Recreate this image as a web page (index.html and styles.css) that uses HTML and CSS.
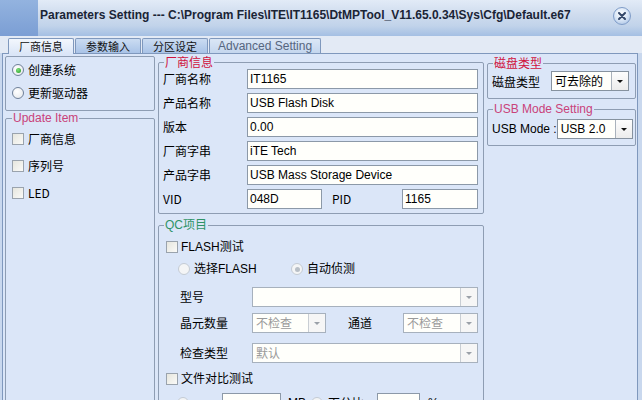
FILE: index.html
```html
<!DOCTYPE html>
<html lang="zh-CN">
<head>
<meta charset="utf-8">
<title>Parameters Setting</title>
<link rel="stylesheet" href="styles.css">
</head>
<body>
<div class="window">
  <div class="titlebar">
    <div class="tb-icon"></div>
    <div class="tb-title">Parameters Setting --- C:\Program Files\ITE\IT1165\DtMPTool_V11.65.0.34\Sys\Cfg\Default.e67</div>
    <div class="tb-close">
      <svg width="8" height="8" viewBox="0 0 8 8"><path d="M1 1L7 7M7 1L1 7" stroke="#34486a" stroke-width="2" stroke-linecap="round"/></svg>
    </div>
  </div>
  <div class="tabstrip">
    <div class="tab active">厂商信息</div>
    <div class="tab">参数输入</div>
    <div class="tab">分区设定</div>
    <div class="tab adv">Advanced Setting</div>
  </div>
  <div class="page">
    <div class="col col-left">
      <div class="grp grp-mode">
        <div class="opt"><span class="radio on"></span>创建系统</div>
        <div class="opt"><span class="radio"></span>更新驱动器</div>
      </div>
      <fieldset class="grp grp-update">
        <legend class="lg-pink">Update Item</legend>
        <div class="opt chk-row"><span class="check"></span>厂商信息</div>
        <div class="opt chk-row"><span class="check"></span>序列号</div>
        <div class="opt chk-row"><span class="check"></span>LED</div>
      </fieldset>
    </div>

    <div class="col col-mid">
      <fieldset class="grp grp-vendor">
        <legend class="lg-red">厂商信息</legend>
        <div class="frow"><span class="flabel">厂商名称</span><div class="field wide">IT1165</div></div>
        <div class="frow"><span class="flabel">产品名称</span><div class="field wide">USB Flash Disk</div></div>
        <div class="frow"><span class="flabel">版本</span><div class="field wide">0.00</div></div>
        <div class="frow"><span class="flabel">厂商字串</span><div class="field wide">iTE Tech</div></div>
        <div class="frow"><span class="flabel">产品字串</span><div class="field wide">USB Mass Storage Device</div></div>
        <div class="frow"><span class="flabel">VID</span><div class="field vid">048D</div><span class="flabel pid-label">PID</span><div class="field pid">1165</div></div>
      </fieldset>

      <fieldset class="grp grp-qc">
        <legend class="lg-green">QC项目</legend>
        <div class="qrow q1"><span class="check"></span>FLASH测试</div>
        <div class="qrow q2">
          <span class="ropt first"><span class="radio dis"></span>选择FLASH</span>
          <span class="ropt"><span class="radio dis on"></span>自动侦测</span>
        </div>
        <div class="qrow q3"><span class="qlabel">型号</span><div class="combo dis c-wide"><span class="ctext"></span><span class="cbtn"></span></div></div>
        <div class="qrow q4">
          <span class="qlabel">晶元数量</span><div class="combo dis c-small"><span class="ctext">不检查</span><span class="cbtn"></span></div>
          <span class="qlabel ch-label">通道</span><div class="combo dis c-small2"><span class="ctext">不检查</span><span class="cbtn"></span></div>
        </div>
        <div class="qrow q5"><span class="qlabel">检查类型</span><div class="combo dis c-wide"><span class="ctext">默认</span><span class="cbtn"></span></div></div>
        <div class="qrow q6"><span class="check"></span>文件对比测试</div>
        <div class="qrow q7">
          <span class="radio dis r-size"></span>
          <div class="field small-a"></div><span class="unit u-mb">MB</span>
          <span class="radio dis r-pct"></span><span class="unit u-pct">百分比</span>
          <div class="field small-b"></div><span class="unit u-sign">%</span>
        </div>
      </fieldset>
    </div>

    <div class="col col-right">
      <fieldset class="grp grp-disk">
        <legend class="lg-red">磁盘类型</legend>
        <div class="rrow"><span class="rlabel">磁盘类型</span><div class="combo c-disk"><span class="ctext">可去除的</span><span class="cbtn"></span></div></div>
      </fieldset>
      <fieldset class="grp grp-usb">
        <legend class="lg-pink">USB Mode Setting</legend>
        <div class="rrow"><span class="rlabel">USB Mode :</span><div class="combo c-usb"><span class="ctext">USB 2.0</span><span class="cbtn"></span></div></div>
      </fieldset>
    </div>
  </div>
</div>
</body>
</html>
```

FILE: styles.css
```css
* { box-sizing: border-box; }
html, body { margin: 0; padding: 0; }
body {
  width: 642px;
  height: 400px;
  overflow: hidden;
  background: #c9d8ee;
  font-family: "Liberation Sans", "Noto Sans CJK SC", sans-serif;
  font-size: 12px;
  color: #000;
}
.window { width: 642px; }

/* title bar */
.titlebar {
  height: 36px;
  display: flex;
  align-items: flex-start;
  background: linear-gradient(#e2ebf7 0%, #cfdcee 40%, #c1d3ea 72%, #a4bfe3 100%);
}
.tb-icon {
  width: 38px;
  height: 36px;
  background: linear-gradient(#93b3df, #7b9ed4);
}
.tb-title {
  flex: 1;
  margin: 8px 0 0 2px;
  font-weight: bold;
  font-size: 12px;
  line-height: 14px;
  color: #1a2436;
  white-space: nowrap;
}
.tb-close {
  width: 18px;
  height: 18px;
  margin: 7px 11px 0 0;
  border-radius: 50%;
  border: 1px solid #7f9cc8;
  background: radial-gradient(circle at 45% 35%, #ffffff 0%, #dce8f7 45%, #9db9e0 100%);
  display: flex;
  align-items: center;
  justify-content: center;
}

/* tabs */
.tabstrip {
  height: 17px;
  display: flex;
  align-items: flex-end;
  padding-left: 8px;
  gap: 1px;
  background: #e3eaf5;
}
.tab {
  height: 15px;
  padding: 0 10px;
  font-family: "Noto Sans CJK SC", sans-serif;
  font-size: 11px;
  line-height: 14px;
  color: #111;
  border: 1px solid #7f98bd;
  border-bottom: none;
  border-radius: 2px 2px 0 0;
  background: linear-gradient(#cbdcf2, #a9c3e7);
}
.tab.active {
  height: 16px;
  margin-bottom: -1px;
  background: linear-gradient(#f3f7fd, #dbe6f7);
  position: relative;
}
.tab.adv {
  padding: 0 8px;
  font-family: "Liberation Sans", sans-serif;
  font-size: 12px;
  color: #56667e;
  background: linear-gradient(#dbe7f6, #c4d6ee);
}

/* page */
.page {
  margin-left: 2px;
  width: 636px;
  height: 360px;
  border: 1px solid #7f98bd;
  border-bottom: none;
  padding: 1px 1px 0 2px;
  background: #dbe6f8;
  display: flex;
  gap: 3px;
  align-items: flex-start;
}
.col { display: flex; flex-direction: column; }
.col-left { width: 150px; }
.col-mid { width: 326px; }
.col-right { width: 149px; }

/* group boxes */
.grp {
  margin: 0;
  min-width: 0;
  border: 1px solid #8e9db3;
  border-radius: 2px;
  padding: 0 4px;
}
legend {
  padding: 0 1px;
  margin-left: 1px;
  font-size: 12px;
  line-height: 14px;
  height: 14px;
}
.lg-red { color: #d0123e; font-family: "Noto Sans CJK SC", sans-serif; }
.lg-pink { color: #c9427a; }
.lg-green { color: #2f9467; font-family: "Liberation Sans", "Noto Sans CJK SC", sans-serif; }

.opt {
  height: 20px;
  display: flex;
  align-items: center;
  font-family: "Noto Sans CJK SC", sans-serif;
  font-size: 12px;
  line-height: 14px;
}

/* radio + checkbox */
.radio {
  width: 12px;
  height: 12px;
  border-radius: 50%;
  border: 1px solid #6f8099;
  background: radial-gradient(circle at 40% 35%, #ffffff, #e3e6ea);
  display: inline-flex;
  align-items: center;
  justify-content: center;
  flex: none;
}
.radio.on::after {
  content: "";
  width: 5px;
  height: 5px;
  border-radius: 50%;
  background: radial-gradient(circle at 40% 35%, #7fe07a, #1f9a23);
}
.radio.dis { border-color: #c4cbd4; background: #f4f5f6; }
.radio.dis.on::after { background: #b8bfc7; }
.check {
  width: 12px;
  height: 12px;
  border: 1px solid #9aa3ad;
  background: linear-gradient(135deg, #e6e6de, #fafaf8);
  flex: none;
}

.grp-mode {
  margin-top: 1px;
  height: 55px;
  padding: 3px 0 0 6px;
  display: flex;
  flex-direction: column;
  gap: 3px;
}
.grp-mode .radio { margin-right: 4px; }

.grp-update {
  height: 320px;
  padding: 4px 0 0 6px;
  display: flex;
  flex-direction: column;
  gap: 7px;
}
.grp-update legend { margin-left: 0; font-family: "Liberation Sans", sans-serif; }
.chk-row .check { margin-right: 4px; }

/* vendor box */
.grp-vendor {
  height: 159px;
  padding: 0 4px 4px 4px;
  display: flex;
  flex-direction: column;
  gap: 4px;
}
.grp-vendor legend { margin-left: 1px; }
.frow {
  height: 20px;
  display: flex;
  align-items: center;
}
.flabel {
  width: 84px;
  flex: none;
  font-family: "Noto Sans CJK SC", sans-serif;
  font-size: 12px;
  line-height: 14px;
}
.field {
  height: 20px;
  border: 1px solid #8c99a8;
  background: #fffffb;
  padding-left: 2px;
  line-height: 18px;
  font-size: 12px;
  white-space: nowrap;
  flex: none;
}
.field.wide { width: 231px; }
.field.vid { width: 75px; }
.flabel.pid-label { width: 70px; margin-left: 10px; }
.field.pid { width: 76px; }

/* QC box */
.grp-qc {
  margin-top: 4px;
  height: 300px;
  padding: 5px 4px 0 4px;
}
.qrow {
  height: 20px;
  display: flex;
  align-items: center;
  font-family: "Liberation Sans", "Noto Sans CJK SC", sans-serif;
  font-size: 12px;
  line-height: 14px;
}
.q1, .q6 { padding-left: 3px; }
.q1 .check, .q6 .check { margin-right: 3px; }
.q2 { margin-top: 2px; padding-left: 15px; }
.q3 { margin-top: 8px; }
.q4 { margin-top: 6px; }
.q5 { margin-top: 10px; }
.q6 { margin-top: 6px; }
.q7 { margin-top: 4px; padding-left: 14px; }

.ropt { display: flex; align-items: center; }
.ropt .radio { margin-right: 4px; }
.ropt.first { width: 113px; }

.qlabel {
  width: 89px;
  padding-left: 17px;
  flex: none;
  font-family: "Noto Sans CJK SC", sans-serif;
}
.qlabel.ch-label { width: 77px; padding-left: 22px; }

/* combos */
.combo {
  height: 20px;
  display: flex;
  flex: none;
  border: 1px solid #86929f;
  background: #fffffb;
  font-family: "Noto Sans CJK SC", sans-serif;
  font-size: 12px;
  line-height: 18px;
}
.ctext { flex: 1; padding-left: 3px; white-space: nowrap; overflow: hidden; }
.cbtn {
  width: 17px;
  border-left: 1px solid #aab2bc;
  background: linear-gradient(#fdfdfd, #ececec);
  display: flex;
  align-items: center;
  justify-content: center;
}
.cbtn::after {
  content: "";
  border-left: 3px solid transparent;
  border-right: 3px solid transparent;
  border-top: 3px solid #111;
}
.combo.dis { border-color: #a7b1bd; color: #9a9a9a; }
.combo.dis .cbtn { background: #f6f6f6; border-left-color: #c9ced4; }
.combo.dis .cbtn::after { border-top-color: #9aa0a8; }
.c-wide { width: 226px; }
.c-small { width: 74px; }
.c-small2 { width: 75px; }

/* last QC row */
.r-size { margin-right: 33px; }
.field.small-a { width: 59px; }
.unit { flex: none; white-space: nowrap; font-family: "Liberation Sans", "Noto Sans CJK SC", sans-serif; }
.u-mb { margin-left: 7px; margin-right: 5px; }
.u-pct { margin-left: 5px; margin-right: 13px; font-family: "Noto Sans CJK SC", sans-serif; }
.field.small-b { width: 43px; }
.u-sign { margin-left: 8px; }

/* right column */
.grp-disk {
  margin-top: 1px;
  height: 43px;
  padding: 1px 6px 0 4px;
}
.grp-usb {
  margin-top: 3px;
  height: 44px;
  padding: 3px 6px 0 4px;
}
.grp-usb legend { font-family: "Liberation Sans", sans-serif; }
.rrow { height: 20px; display: flex; align-items: center; justify-content: space-between; }
.rlabel { font-family: "Liberation Sans", "Noto Sans CJK SC", sans-serif; white-space: nowrap; }
.c-disk { width: 78px; }
.c-usb { width: 76px; font-family: "Liberation Sans", sans-serif; }
```
